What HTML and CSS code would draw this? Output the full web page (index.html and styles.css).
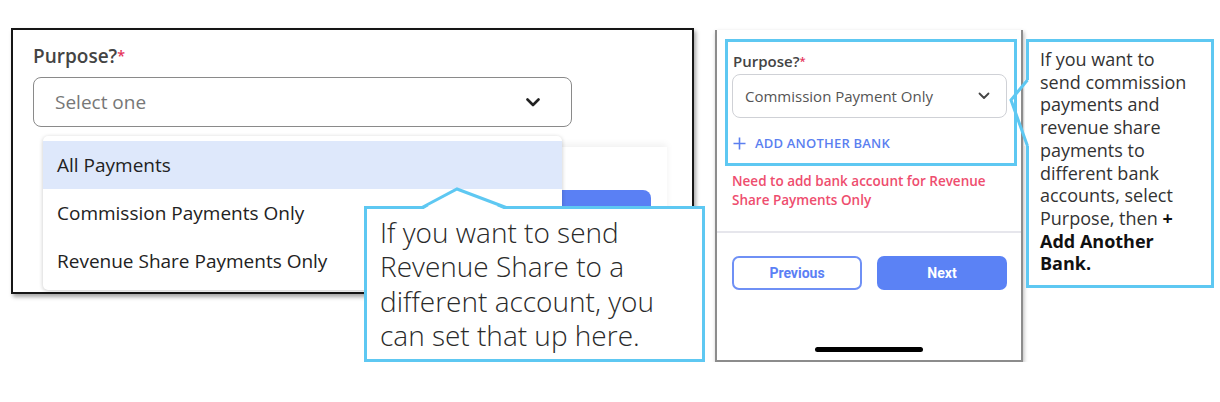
FILE: index.html
```html
<!DOCTYPE html>
<html lang="en">
<head>
  <meta charset="UTF-8" />
  <meta name="viewport" content="width=device-width, initial-scale=1" />
  <title>Purpose - Add Another Bank</title>
  <link rel="stylesheet" href="styles.css">
</head>
<body>

  <div class="page">

    <!-- desktop form with the open dropdown -->
    <div class="desktop">
      <div class="desk-label">Purpose?<span class="req">*</span></div>
      <div class="desk-select">
        <span>Select one</span>
        <svg class="chevron" width="14" height="9" viewBox="0 0 14 9">
          <polyline points="1.5,1.5 7,7 12.5,1.5" fill="none" stroke="#222" stroke-width="2.6" stroke-linecap="round" stroke-linejoin="round"/>
        </svg>
      </div>

      <div class="modal-behind">
        <div class="modal-btn"></div>
      </div>

      <ul class="menu">
        <li class="active">All Payments</li>
        <li>Commission Payments Only</li>
        <li>Revenue Share Payments Only</li>
      </ul>

      <div class="callout callout-up">
        <svg class="pointer-up" width="95" height="26" viewBox="0 0 95 26">
          <polygon points="5,25 40,4 89,25" fill="#fff"/>
          <polyline points="5,22.5 40,4 89,22.5" fill="none" stroke="#5ec8f2" stroke-width="3"/>
        </svg>
        <p>If you want to send<br>Revenue Share to a<br>different account, you<br>can set that up here.</p>
      </div>
    </div>

    <!-- mobile screen -->
    <div class="phone">
      <div class="focus-box">
        <div class="m-label">Purpose?<span class="req">*</span></div>
        <div class="m-select">
          <span>Commission Payment Only</span>
          <svg width="12" height="8" viewBox="0 0 12 8">
            <polyline points="1.5,1.5 6,6 10.5,1.5" fill="none" stroke="#444" stroke-width="1.8" stroke-linecap="round" stroke-linejoin="round"/>
          </svg>
        </div>
        <div class="add-bank">
          <svg width="13" height="13" viewBox="0 0 13 13">
            <path d="M6.5 0.5v12M0.5 6.5h12" stroke="#5b7ff0" stroke-width="1.6"/>
          </svg>
          <span>ADD ANOTHER BANK</span>
        </div>
      </div>

      <div class="m-error">Need to add bank account for Revenue<br>Share Payments Only</div>

      <div class="m-divider"></div>

      <div class="m-buttons">
        <button class="btn-prev">Previous</button>
        <button class="btn-next">Next</button>
      </div>

      <div class="home-bar"></div>
    </div>

    <div class="callout callout-left">
      <svg class="pointer-left" width="24" height="75" viewBox="0 0 24 75">
        <rect x="15.5" y="5" width="5" height="66" fill="#fff"/>
        <polyline points="18.5,5 2,25 18.5,71" fill="none" stroke="#5ec8f2" stroke-width="3"/>
      </svg>
      <p>If you want to<br>send commission<br>payments and<br>revenue share<br>payments to<br>different bank<br>accounts, select<br>Purpose, then <strong>+<br>Add Another<br>Bank.</strong></p>
    </div>

  </div>

</body>
</html>
```

FILE: styles.css
```css
body {
  margin: 0;
  background: #fff;
  font-family: 'Open Sans', 'Liberation Sans', sans-serif;
  color: #333;
}

.page {
  display: flex;
  align-items: flex-start;
  padding: 28px 0 0 11px;
}

/* ---------- desktop panel ---------- */

.desktop {
  position: relative;
  box-sizing: border-box;
  width: 683px;
  height: 266px;
  border: 2px solid #161616;
  box-shadow: 2px 3px 4px rgba(0, 0, 0, 0.35);
  padding: 13px 0 0 20px;
  margin-right: 21px;
}

.desk-label {
  font-size: 19px;
  line-height: 26px;
  font-weight: 600;
  color: #444;
}

.req {
  color: #e5345a;
  font-size: 0.75em;
  vertical-align: top;
}

.desk-select {
  box-sizing: border-box;
  width: 539px;
  height: 50px;
  margin-top: 8px;
  border: 1px solid #8a8a8a;
  border-radius: 8px;
  display: flex;
  align-items: center;
  justify-content: space-between;
  padding: 0 31px 0 21px;
  font-size: 19px;
  color: #777;
}

.modal-behind {
  position: absolute;
  left: 407px;
  top: 117px;
  width: 247px;
  height: 145px;
  background: #fff;
  box-shadow: 0 -3px 7px rgba(0, 0, 0, 0.06);
}

.modal-btn {
  position: absolute;
  right: 16px;
  top: 43px;
  width: 120px;
  height: 40px;
  border-radius: 8px;
  background: #5a80f4;
}

.menu {
  position: absolute;
  left: 30px;
  top: 106px;
  width: 519px;
  margin: 0;
  padding: 5px 0;
  list-style: none;
  background: #fff;
  border-radius: 5px;
  box-shadow: 0 1px 4px rgba(0, 0, 0, 0.22);
}

.menu li {
  height: 48px;
  line-height: 48px;
  padding-left: 14px;
  font-size: 19px;
  color: #222;
}

.menu li.active {
  background: #dee8fb;
}

/* ---------- callouts ---------- */

.callout {
  position: relative;
  box-sizing: border-box;
  background: #fff;
  border: 3px solid #5ec8f2;
}

.callout p {
  margin: 0;
}

.callout-up {
  position: absolute;
  left: 351px;
  top: 176px;
  width: 341px;
  height: 156px;
  padding: 6px 0 0 13px;
  font-size: 28px;
  line-height: 34.4px;
  font-weight: 300;
  color: #2a2a2a;
}

.pointer-up {
  position: absolute;
  left: 50px;
  top: -24px;
}

.callout-left {
  width: 188px;
  height: 249px;
  margin: 11px 0 0 3px;
  padding: 6px 0 0 11px;
  font-size: 18px;
  line-height: 22.7px;
  color: #333;
}

.callout-left strong {
  font-weight: 700;
  color: #111;
}

.pointer-left {
  position: absolute;
  left: -20px;
  top: 33px;
}

/* ---------- phone ---------- */

.phone {
  box-sizing: border-box;
  width: 308px;
  height: 332px;
  margin-top: 2px;
  border: 2px solid #8c8c8c;
  border-top: none;
  box-shadow: 1px 2px 4px rgba(0, 0, 0, 0.28);
  display: flex;
  flex-direction: column;
  padding-bottom: 8px;
}

.focus-box {
  box-sizing: border-box;
  width: 292px;
  height: 127px;
  margin: 9px 0 0 8px;
  border: 3px solid #5ec8f2;
  padding: 9px 0 0 4px;
}

.m-label {
  padding-left: 1px;
  font-size: 15px;
  line-height: 20px;
  font-weight: 600;
  color: #444;
}

.m-select {
  box-sizing: border-box;
  width: 275px;
  height: 44px;
  margin-top: 3px;
  border: 1px solid #cfd1d6;
  border-radius: 8px;
  display: flex;
  align-items: center;
  justify-content: space-between;
  padding: 0 16px 0 12px;
  font-size: 15px;
  color: #555;
}

.add-bank {
  display: flex;
  align-items: center;
  gap: 9px;
  margin-top: 15px;
  padding-left: 1px;
  height: 20px;
  font-size: 13px;
  font-weight: 600;
  letter-spacing: 0.2px;
  color: #5b7ff0;
}

.m-error {
  margin: 6px 0 0 15px;
  font-size: 13.5px;
  line-height: 19px;
  font-weight: 600;
  color: #ee4d6e;
}

.m-divider {
  height: 2px;
  margin-top: 21px;
  background: #e6e6ec;
}

.m-buttons {
  display: flex;
  gap: 15px;
  margin: 23px 0 0 15px;
}

.m-buttons button {
  box-sizing: border-box;
  width: 130px;
  height: 34px;
  border-radius: 7px;
  font-family: Roboto, 'Liberation Sans', sans-serif;
  font-size: 14px;
  font-weight: 700;
  cursor: pointer;
}

.btn-prev {
  background: #fff;
  border: 2px solid #6f90f5;
  color: #5b80f5;
}

.btn-next {
  background: #5b82f5;
  border: none;
  color: #fff;
}

.home-bar {
  margin: auto 0 0 98px;
  width: 108px;
  height: 5px;
  border-radius: 3px;
  background: #000;
}
```
